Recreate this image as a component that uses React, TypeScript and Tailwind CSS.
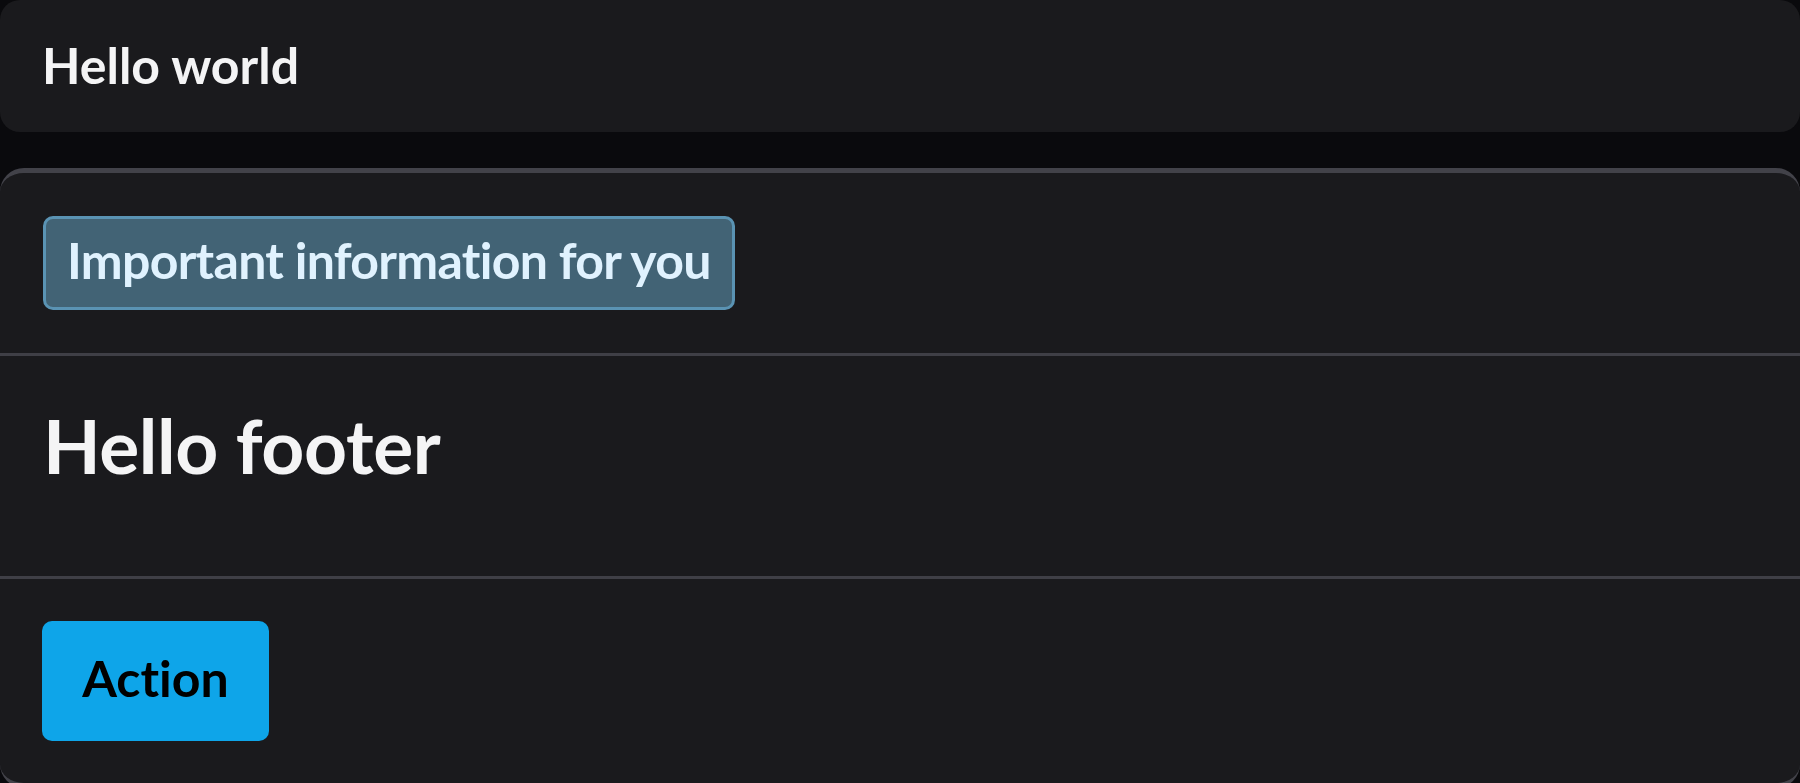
export default function App() {
  return (
    <div className="min-h-screen bg-[#0a0a0d] font-['Lato',_'Liberation_Sans',_sans-serif] [font-variant-ligatures:none]">
      <header className="rounded-[20px] bg-[#1a1a1d] px-[42px] pt-[35px] pb-[37px]">
        <h1 className="text-[50px] font-bold leading-[60px] text-[#f4f4f5]">Hello world</h1>
      </header>

      <section className="mt-[36px] overflow-hidden rounded-[24px] border-y-[5px] border-[#424249] bg-[#1a1a1d]">
        <div className="px-[43px] py-[43px]">
          <span className="inline-flex h-[94px] items-center rounded-[10px] border-[3px] border-[#5a93b3] bg-[#426375] px-[21px] pb-[6px] text-[50px] font-bold leading-[60px] tracking-[-0.7px] text-[#e0f2fe]">
            Important information for you
          </span>
        </div>

        <div className="h-[223px] border-t-[3px] border-[#3f3f46] px-[43px] pt-[44px]">
          <h2 className="text-[75px] font-bold leading-[90px] tracking-[-0.4px] text-[#f4f4f5]">Hello footer</h2>
        </div>

        <div className="border-t-[3px] border-[#3f3f46] px-[42px] pt-[42px] pb-[42px]">
          <button className="flex h-[120px] w-[227px] items-center justify-center rounded-[10px] bg-[#0ea5e9] pb-[6px] text-[50px] font-bold text-black">
            Action
          </button>
        </div>
      </section>
    </div>
  );
}
